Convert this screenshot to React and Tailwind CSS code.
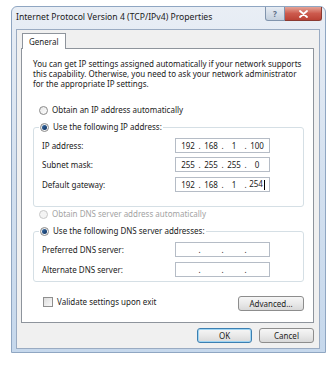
import React from 'react'

const font = { fontFamily: '"Noto Sans", "Open Sans", Arial, sans-serif' }

function Radio({ checked, disabled }) {
  return (
    <span
      className={`w-[9px] h-[9px] rounded-full border flex items-center justify-center shrink-0 ${
        disabled ? 'border-[#c8c8c8] bg-[#f4f4f4]' : 'border-[#8a8a8a] bg-gradient-to-br from-[#e6e6e6] to-[#ffffff]'
      }`}
    >
      {checked && <span className="w-[5px] h-[5px] rounded-full bg-gradient-to-br from-[#3a6fa8] to-[#0d2f5e]" />}
    </span>
  )
}

function IpField({ parts, caret }) {
  const segs = parts || ['', '', '', '']
  return (
    <div className="w-[95px] h-[15px] border border-[#b5bcc6] bg-white flex items-center pl-[2px] text-[8px] text-[#222]">
      {segs.map((s, i) => (
        <React.Fragment key={i}>
          <span className="w-[20px] text-center leading-none">
            {s}
            {caret && i === 3 && <span className="inline-block w-px h-[10px] bg-black align-middle ml-px" />}
          </span>
          {i < 3 && <span className="w-[3px] text-center leading-none">.</span>}
        </React.Fragment>
      ))}
    </div>
  )
}

function Row({ label, parts, caret }) {
  return (
    <div className="flex items-center h-[15px]">
      <span className="w-[141px] pl-[8px] text-[8px] text-[#222]">{label}</span>
      <IpField parts={parts} caret={caret} />
    </div>
  )
}

function Button({ children, primary, className = '' }) {
  return (
    <div
      className={`h-[15px] rounded-[3px] border flex items-center justify-center text-[8px] text-[#222] bg-gradient-to-b from-[#f6f6f6] via-[#e9e9e9] to-[#d9d9d9] ${
        primary ? 'border-[#3c7fb1] shadow-[inset_0_0_0_1px_#9fd5f3]' : 'border-[#8d8d8d]'
      } ${className}`}
    >
      {children}
    </div>
  )
}

export default function App() {
  return (
    <div className="w-[332px] h-[365px] bg-white pt-[6px] pl-[11px]" style={font}>
      <div className="w-[315px] h-[347px] border border-[#8fa6c2] rounded-t-[6px] bg-gradient-to-b from-[#e9eef5] via-[#d3e0ef] to-[#c6d8ec] flex flex-col pl-[4px] pr-[5px] pb-[3px]">
        {/* Title bar */}
        <div className="h-[22px] flex items-start justify-between">
          <span className="text-[8.65px] text-[#1a1a1a] mt-[4px]">Internet Protocol Version 4 (TCP/IPv4) Properties</span>
          <div className="flex mr-[-2px]">
            <div className="w-[20px] h-[14px] rounded-bl-[3px] border border-t-0 border-[#8194ad] bg-gradient-to-b from-[#e7ecf3] to-[#c3cfdd] flex items-center justify-center text-[8px] text-[#5b6d86] font-bold">
              ?
            </div>
            <div className="w-[37px] h-[14px] rounded-br-[3px] border border-t-0 border-l-0 border-[#8a3a32] bg-gradient-to-b from-[#e4a397] via-[#cc5a4d] to-[#bb4235] flex items-center justify-center">
              <svg width="9" height="8" viewBox="0 0 9 8">
                <path d="M1 1 L8 7 M8 1 L1 7" stroke="white" strokeWidth="1.8" strokeLinecap="round" />
              </svg>
            </div>
          </div>
        </div>

        {/* Client area */}
        <div className="flex-1 border border-[#9aabc2] bg-[#f0f0f0] flex flex-col pt-[3px] pl-[4px] pr-[5px]">
          <div className="flex">
            <div className="ml-[1px] h-[16px] px-[6px] border border-b-0 border-[#8e949c] bg-white text-[8px] text-[#222] flex items-center -mb-px relative">
              General
            </div>
          </div>
          <div className="h-[275px] border border-[#8e949c] bg-white pt-[10px] pl-[11px] pr-[9px] flex flex-col">
            <p className="text-[8px] leading-[10px] text-[#222]">
              You can get IP settings assigned automatically if your network supports this capability. Otherwise, you need to ask your network administrator for the appropriate IP settings.
            </p>

            <div className="flex items-center gap-[4px] h-[12px] mt-[15px] pl-[6px] text-[8px] text-[#222]">
              <Radio />
              <span>Obtain an IP address automatically</span>
            </div>

            <fieldset className="mt-[5px] border border-[#d5dfe5] rounded-[3px] pb-[14px]">
              <legend className="ml-[5px] px-px bg-white flex items-center gap-[4px] h-[12px] text-[8px] text-[#222]">
                <Radio checked />
                <span>Use the following IP address:</span>
              </legend>
              <div className="flex flex-col mt-[5px]">
                <Row label="IP address:" parts={['192', '168', '1', '100']} />
                <div className="mt-[4px]">
                  <Row label="Subnet mask:" parts={['255', '255', '255', '0']} />
                </div>
                <div className="mt-[5px]">
                  <Row label="Default gateway:" parts={['192', '168', '1', '254']} caret />
                </div>
              </div>
            </fieldset>

            <div className="flex items-center gap-[4px] h-[12px] mt-[1px] pl-[6px] text-[8px] text-[#a3a3a3]">
              <Radio disabled />
              <span>Obtain DNS server address automatically</span>
            </div>

            <fieldset className="mt-[5px] border border-[#d5dfe5] rounded-[3px] pb-[4px]">
              <legend className="ml-[5px] px-px bg-white flex items-center gap-[4px] h-[12px] text-[8px] text-[#222]">
                <Radio checked />
                <span>Use the following DNS server addresses:</span>
              </legend>
              <div className="flex flex-col gap-[5px] mt-[5px]">
                <Row label="Preferred DNS server:" />
                <Row label="Alternate DNS server:" />
              </div>
            </fieldset>

            <div className="flex items-start justify-between mt-[14px]">
              <div className="flex items-center gap-[4px] pl-[10px] text-[8px] text-[#222]">
                <span className="w-[10px] h-[10px] border border-[#8f8f8f] bg-gradient-to-br from-[#dcdcdc] to-[#fafafa]" />
                <span>Validate settings upon exit</span>
              </div>
              <Button className="w-[66px]">Advanced...</Button>
            </div>
          </div>

          <div className="flex justify-end gap-[7px] mt-[5px]">
            <Button primary className="w-[55px]">OK</Button>
            <Button className="w-[55px]">Cancel</Button>
          </div>
        </div>
      </div>
    </div>
  )
}
